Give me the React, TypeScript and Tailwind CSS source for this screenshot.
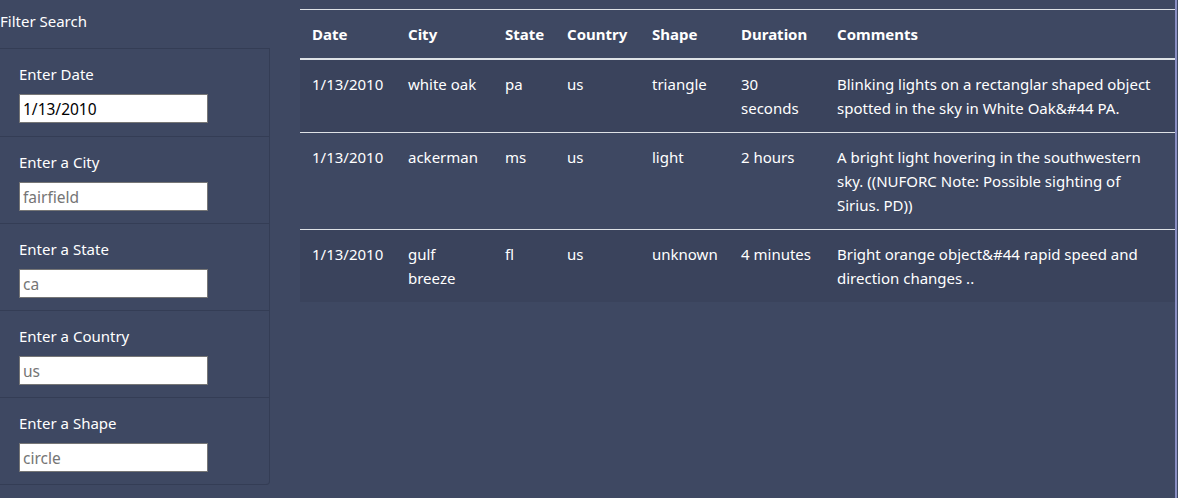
const fields = [
  { label: 'Enter Date', value: '1/13/2010', filled: true },
  { label: 'Enter a City', value: 'fairfield' },
  { label: 'Enter a State', value: 'ca' },
  { label: 'Enter a Country', value: 'us' },
  { label: 'Enter a Shape', value: 'circle' },
];

const rows = [
  ['1/13/2010', 'white oak', 'pa', 'us', 'triangle', '30 seconds', 'Blinking lights on a rectanglar shaped object spotted in the sky in White Oak&#44 PA.'],
  ['1/13/2010', 'ackerman', 'ms', 'us', 'light', '2 hours', 'A bright light hovering in the southwestern sky. ((NUFORC Note: Possible sighting of Sirius. PD))'],
  ['1/13/2010', 'gulf breeze', 'fl', 'us', 'unknown', '4 minutes', 'Bright orange object&#44 rapid speed and direction changes ..'],
];

const headers = [
  { name: 'Date', w: 'w-[96px]' },
  { name: 'City', w: 'w-[97px]' },
  { name: 'State', w: 'w-[62px]' },
  { name: 'Country', w: 'w-[85px]' },
  { name: 'Shape', w: 'w-[89px]' },
  { name: 'Duration', w: 'w-[96px]' },
  { name: 'Comments', w: '' },
];

export default function App() {
  return (
    <div
      className="w-[1178px] h-[498px] bg-[#3e4862] text-white flex overflow-hidden text-[15px] leading-6"
      style={{ fontFamily: '"Noto Sans", "Open Sans", sans-serif' }}
    >
      {/* sidebar */}
      <div className="w-[270px] shrink-0 flex flex-col">
        <div className="h-[42px] flex items-center">Filter Search</div>
        <ul className="mt-[6px] border border-l-0 border-[#343d55] rounded-br-[4px]">
          {fields.map((f, i) => (
            <li key={f.label} className={`h-[87px] pl-[19px] pt-[13px] ${i > 0 ? 'border-t border-[#343d55]' : ''}`}>
              <label className="block">{f.label}</label>
              <input
                readOnly
                value={f.value}
                className={`mt-[8px] block w-[189px] h-[29px] bg-white border border-[#767676] px-[3px] text-[15.5px] outline-none ${f.filled ? 'text-black' : 'text-[#757575]'}`}
              />
            </li>
          ))}
        </ul>
      </div>

      {/* table */}
      <div className="ml-[30px] flex-1 pt-[9px] border-r-[2px] border-r-[#8a8fc4] mr-[1px]">
        <table className="w-full table-fixed border-collapse">
          <thead>
            <tr className="border-t border-[#dee2e6]">
              {headers.map((h) => (
                <th key={h.name} className={`${h.w} text-left font-bold px-3 pt-[12px] pb-[12px] align-bottom border-b-2 border-[#dee2e6]`}>
                  {h.name}
                </th>
              ))}
            </tr>
          </thead>
          <tbody>
            {rows.map((r, i) => (
              <tr key={i} className={`${i > 0 ? 'border-t border-[#dee2e6]' : ''} ${i % 2 === 0 ? 'bg-[#3a435c]' : ''}`}>
                {r.map((c, j) => (
                  <td key={j} className="px-3 py-3 align-top">
                    {c}
                  </td>
                ))}
              </tr>
            ))}
          </tbody>
        </table>
      </div>
    </div>
  );
}
